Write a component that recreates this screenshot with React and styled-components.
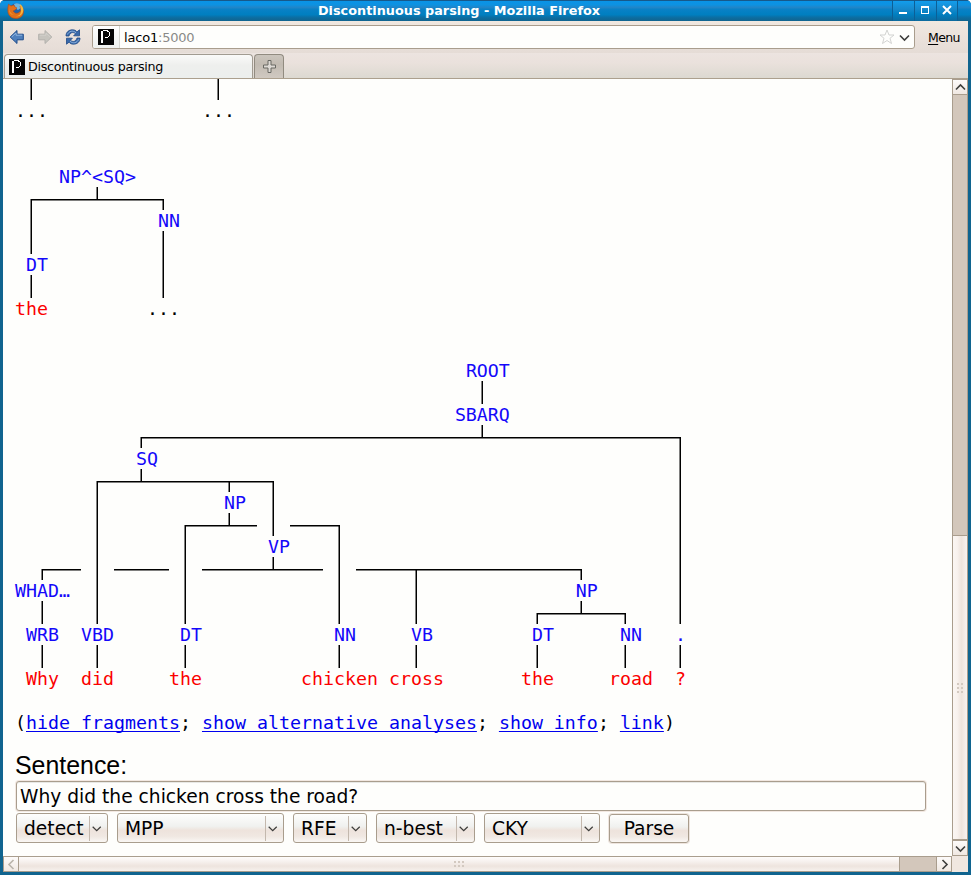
import React from 'react';
import styled, { createGlobalStyle, css } from 'styled-components';

const GlobalStyle = createGlobalStyle`
  * { box-sizing: border-box; }
  html, body { margin: 0; padding: 0; overflow: hidden; background: #fff; }
  button, input { margin: 0; font: inherit; color: inherit; }
`;

const ui = `"DejaVu Sans", sans-serif`;
const edge = '#a99d8d';

const Window = styled.div`
  width: 971px;
  height: 875px;
  display: flex;
  flex-direction: column;
  padding: 0 3px 3px;
  background: #10648f;
  border-radius: 5px 5px 0 0;
  font-family: ${ui};
  color: #000;
  overflow: hidden;
`;

const TitleBar = styled.header`
  flex: none;
  height: 21px;
  margin: 0 -3px;
  display: flex;
  align-items: center;
  border-top: 1px solid #17598a;
  background: linear-gradient(#0a93e6 0, #0d92e2 18%, #2085c8 32%, #0981c6 42%, #007fc0 68%, #0d6c9f 84%, #10648f 100%);
`;

const TitleIcon = styled.div`
  width: 32px;
  height: 20px;
  padding-left: 7px;
`;

const Title = styled.h1`
  flex: 1;
  margin: 0;
  padding-right: 6px;
  text-align: center;
  font-size: 12.8px;
  line-height: 20px;
  font-weight: bold;
  letter-spacing: ${(p) => p.$track}px;
  color: #fff;
`;

const WindowControls = styled.div`
  display: flex;
  height: 20px;
  padding-right: 13px;
`;

const WindowButton = styled.button`
  width: 22px;
  height: 20px;
  padding: 0;
  border: 0;
  border-left: 1px solid #0c5f96;
  background: linear-gradient(#129ded, #1789cc 40%, #0080c2 65%, #0d6a9d);
  display: flex;
  &:last-child { border-right: 1px solid #0c5f96; }
`;

const Toolbar = styled.nav`
  flex: none;
  height: 32px;
  display: flex;
  align-items: center;
  background: linear-gradient(#f0e8e0, #ebe2dc 45%, #e5dcd6);
`;

const NavButton = styled.button`
  width: 28px;
  height: 32px;
  padding: 0;
  border: 0;
  background: none;
  display: flex;
  align-items: center;
  justify-content: center;
`;

const AddressBar = styled.div`
  width: 823px;
  height: 24px;
  margin-left: 5px;
  display: flex;
  align-items: center;
  border: 1px solid ${edge};
  border-radius: 3px;
  background: #fefefc;
  overflow: hidden;
`;

const SiteBadge = styled.div`
  width: 27px;
  height: 22px;
  padding: 3px 0 0 5px;
  border-right: 1px solid #d5d5d0;
  background: linear-gradient(#fff, #eef0ee);
`;

const Address = styled.div`
  flex: 1;
  padding-left: 4px;
  padding-top: 1px;
  font-size: 13px;
  line-height: 22px;
  letter-spacing: -0.2px;
  span { color: #8a8a88; }
`;

const MenuLabel = styled.div`
  margin-left: 13px;
  padding-top: 1px;
  font-size: 12.5px;
  line-height: 32px;
  letter-spacing: -0.6px;
  u { text-underline-offset: 2px; text-decoration-thickness: 1px; }
`;

const TabStrip = styled.div`
  flex: none;
  height: 26px;
  display: flex;
  align-items: flex-end;
  gap: 1px;
  padding-left: 1px;
  border-bottom: 1px solid #aca08e;
  background: linear-gradient(#ece4e0, #eae1dc 40%, #dcd9d1);
`;

const Tab = styled.div`
  width: 249px;
  height: 24px;
  display: flex;
  align-items: center;
  gap: 3px;
  padding-left: 4px;
  border: 1px solid #a19b91;
  border-bottom: 0;
  border-radius: 4px 4px 0 0;
  background: linear-gradient(#fafaf9, #eeefed 45%, #ecefed);
  font-size: 12.7px;
  letter-spacing: ${(p) => p.$track}px;
`;

const NewTab = styled.button`
  width: 30px;
  height: 24px;
  padding: 0;
  display: flex;
  align-items: center;
  justify-content: center;
  border: 1px solid #918b80;
  border-bottom: 0;
  border-radius: 4px 4px 0 0;
  background: linear-gradient(#cbc5bd, #c2bbb2 40%, #d0c9c1);
`;

const Viewport = styled.div`
  flex: none;
  height: 793px;
  display: grid;
  grid-template-columns: 949px 16px;
  grid-template-rows: 777px 16px;
  background: #f0e7e0;
`;

const Page = styled.main`
  padding-left: 12px;
  background: #fefefc;
  overflow: hidden;
`;

const Document = styled.div`
  margin-top: -1px;
`;

const Tree = styled.pre`
  position: relative;
  margin: 0 0 ${(p) => p.$after}px;
  font-family: "DejaVu Sans Mono", monospace;
  font-size: 18.27px;
  line-height: 22px;
`;

const Branches = styled.svg`
  position: absolute;
  top: 0;
  left: 0;
  overflow: visible;
`;

const TreeRow = styled.div`
  height: 22px;
  white-space: pre;
`;

const Label = styled.span`
  color: ${(p) => ({ tag: '#1408fa', word: '#fb0000', gap: '#000' })[p.$kind]};
`;

const Links = styled.p`
  margin: 0 0 17px;
  font-family: "DejaVu Sans Mono", monospace;
  font-size: 18.27px;
  line-height: 22px;
  white-space: pre;
  a { color: #0000ee; text-decoration: underline; text-decoration-thickness: 1px; text-underline-offset: 2px; text-decoration-skip-ink: none; }
`;

const FieldLabel = styled.label`
  display: block;
  height: 30px;
  font-family: "Liberation Sans", sans-serif;
  font-size: 24.9px;
  line-height: 29px;
`;

const Sentence = styled.input`
  display: block;
  width: 910px;
  height: 30px;
  margin-left: 1px;
  padding: 0 3px;
  border: 1px solid ${edge};
  border-radius: 3px;
  background: #fefefc;
  box-shadow: inset 0 1px #e8e8e5, 0 0 0 1px #f2e8e1;
  font-family: ${ui};
  font-size: 18.67px;
  outline: 0;
`;

const Controls = styled.div`
  display: flex;
  gap: 9px;
  padding: 2px 0 0 1px;
`;

const raised = css`
  border: 1px solid ${edge};
  border-radius: 3px;
  background: linear-gradient(#fefefd, #f0f1ef 44%, #eee3dc 58%, #f0e8e2 80%, #faf7f4);
  font-family: ${ui};
  font-size: 18.67px;
`;

const Picker = styled.button`
  ${raised}
  width: ${(p) => p.$width}px;
  height: 30px;
  padding: 0 0 0 7px;
  display: flex;
  align-items: center;
  justify-content: space-between;
  svg { flex: none; width: 18px; height: 25px; border-left: 1px solid #c3b8ad; }
`;

const ParseButton = styled.button`
  ${raised}
  width: 80px;
  height: 29px;
  margin-top: 1px;
  padding: 0;
  box-shadow: 0 0 0 1px #eee5de;
`;

const Scrollbar = styled.div`
  display: flex;
  flex-direction: ${(p) => (p.$vertical ? 'column' : 'row')};
  background: #d3c7bb;
  border: 0 solid ${edge};
  border-width: ${(p) => (p.$vertical ? '0 1px' : '1px 0')};
`;

const ScrollButton = styled.button`
  flex: none;
  width: ${(p) => (p.$vertical ? 14 : 16)}px;
  height: ${(p) => (p.$vertical ? 16 : 14)}px;
  padding: 0;
  border: 0 solid ${edge};
  border-width: ${(p) => (p.$vertical ? '1px 0' : '0 1px')};
  display: flex;
  align-items: center;
  justify-content: center;
  background: linear-gradient(#fdfbfa, #f0e8e2);
  svg { flex: none; }
`;

const Thumb = styled.div`
  flex: none;
  display: flex;
  align-items: center;
  justify-content: center;
  ${(p) =>
    p.$vertical
      ? css`height: ${p.$size}px; border-top: 1px solid ${edge}; border-bottom: 1px solid ${edge}; background: linear-gradient(90deg, #fbf6f3, #f8f2ee 30%, #eee4dd 60%, #f8f2ef);`
      : css`width: ${p.$size}px; background: linear-gradient(#fefcfb, #f7f2ef 30%, #eee4de 65%, #f6f1ed);`}
`;

const Track = styled.div`
  flex: none;
  ${(p) => (p.$vertical ? 'height' : 'width')}: ${(p) => p.$size}px;
  border: 0 solid ${edge};
  border-left-width: ${(p) => (p.$vertical ? 0 : 1)}px;
`;

function Firefox() {
  return (
    <svg width="18" height="19" viewBox="0 0 18 19">
      <circle cx="9.3" cy="9" r="6.8" fill="#1f62ab" />
      <path d="M7 3c3-2 7 0 8 3l-4 3-3-2z" fill="#6fb4dc" />
      <path d="M1.500 3.200 4 5l3-1 1 2 2 1-2 2-2 1 2 2c3 1 5-1 6-3l-1-4c3 2 3.500 4 3.500 5.500C16.500 15 13 17.500 9 17.500 4 17.500.8 14 .8 9.500.8 7 1 5 1.500 3.200z" fill="#e2701a" stroke="#b54918" strokeWidth=".6" />
      <path d="M13 3c3 2 4 5 3 8-1 3-4 5-7 4 3 0 5-2 5-5z" fill="#f7b53b" />
      <path d="M2 6c0 4 2 7 5 8-4 0-5-3-5-8z" fill="#f49b2c" />
    </svg>
  );
}

function Favicon() {
  return (
    <svg width="16" height="16" viewBox="0 0 16 16" shapeRendering="crispEdges">
      <path fill="#050505" d="M0 0h16v16H0z" />
      <path fill="#fff" d="M3 2h2v12H3zM5 1h5v1H5zM9 2h2v1H9zM11 3h1v4h-1zM10 7h1v1h-1zM7 8h3v1H7z" />
    </svg>
  );
}

function ArrowLeft({ muted }) {
  return (
    <svg width="16" height="16" viewBox="0 0 16 16" transform={muted ? 'scale(-1 1)' : undefined}>
      <path d="M1.200 8 8 1.500v3.700h6.300v5.600H8v3.700z" fill={muted ? '#c6c4be' : '#4f80bd'} stroke={muted ? '#b2b0ac' : '#1d4b8b'} />
      <path d="M2.700 8 7 4v2.200h6.200" fill="none" stroke={muted ? '#d2d0cb' : '#8fb4df'} />
    </svg>
  );
}

function Reload() {
  return (
    <svg width="16" height="16" viewBox="0 0 16 16">
      <g fill="#3969aa" stroke="#204a87" strokeWidth=".8">
        <path id="reload-half" d="M1 7C1 3 4 .8 7.500.8c2 0 3.500.7 4.500 2l2.500-2v6H8.600l2-2C8 2.500 5 3.500 4 7z" />
        <use href="#reload-half" transform="rotate(180 8 8)" />
      </g>
      <path d="M2.500 5.500C4 2 8 1 11 3.800M13.500 10.500C12 14 8 15 5 12.200" fill="none" stroke="#8db2dd" />
    </svg>
  );
}

function Chevron({ dir = 'down', color = '#3e3e3c', width = 1.6, shift = 0 }) {
  const d = {
    down: 'M5 10.500l4.500 4.500 4.500-4.500',
    up: 'M5 14.500l4.500-4.500 4.500 4.500',
    left: 'M11.500 8l-4.500 4.500 4.500 4.500',
    right: 'M7.500 8l4.500 4.500-4.500 4.500',
  }[dir];
  return (
    <svg width="19" height="25" viewBox={`${shift} 0 19 25`}>
      <path d={d} fill="none" stroke={color} strokeWidth={width} />
    </svg>
  );
}

function Grip({ vertical }) {
  const cols = vertical ? [0, 4] : [0, 4, 8];
  const rows = vertical ? [0, 4, 8] : [0, 4];
  return (
    <svg width="10" height="10" viewBox="0 0 10 10" shapeRendering="crispEdges">
      {cols.flatMap((x) => rows.map((y) => <rect key={`${x}-${y}`} x={x + (vertical ? 2 : 0)} y={y + (vertical ? 0 : 2)} width="2" height="2" fill="#d3c9c0" />))}
    </svg>
  );
}

const bars = (...cols) => cols.map((col) => [col, '│']);
const h = (n) => '─'.repeat(n);

const clippedTree = [bars(1, 18), [[0, '...'], [17, '...']]];

const fragment = [
  [[4, 'NP^<SQ>']],
  [[1, `┌${h(5)}┴${h(5)}┐`]],
  [[1, '│'], [13, 'NN']],
  bars(1, 13),
  [[1, 'DT'], [13, '│']],
  bars(1, 13),
  [[0, 'the'], [12, '...']],
];

const parseTree = [
  [[41, 'ROOT']],
  bars(42),
  [[40, 'SBARQ']],
  [[11, `┌${h(30)}┴${h(17)}┐`]],
  [[11, 'SQ'], [60, '│']],
  [[7, `┌${h(3)}┴${h(7)}┬${h(3)}┐`], [60, '│']],
  [[7, '│'], [19, 'NP'], [23, '│'], [60, '│']],
  [[7, '│'], [15, `┌${h(3)}┴${h(2)}`], [23, '│'], [25, `${h(4)}┐`], [60, '│']],
  [[7, '│'], [15, '│'], [23, 'VP'], [29, '│'], [60, '│']],
  [[2, `┌${h(3)}`], [7, '│'], [9, h(5)], [15, '│'], [17, `${h(6)}┴${h(4)}`], [29, '│'], [31, `${h(5)}┬${h(14)}┐`], [60, '│']],
  [[0, 'WHAD…'], ...bars(7, 15, 29, 36), [51, 'NP'], [60, '│']],
  [...bars(2, 7, 15, 29, 36), [47, `┌${h(3)}┴${h(3)}┐`], [60, '│']],
  [[1, 'WRB'], [6, 'VBD'], [15, 'DT'], [29, 'NN'], [36, 'VB'], [47, 'DT'], [55, 'NN'], [60, '.']],
  bars(2, 7, 15, 29, 36, 47, 55, 60),
  [[1, 'Why'], [6, 'did'], [14, 'the'], [26, 'chicken'], [34, 'cross'], [46, 'the'], [54, 'road'], [60, '?']],
];

const isBranch = (text) => /^[│┌┐┴┬─]/.test(text);

function labelKind(text) {
  if (text === '.' || /^[A-Z]{2}/.test(text)) return 'tag';
  return /^[A-Za-z?]/.test(text) ? 'word' : 'gap';
}

// Each branch mark occupies one 11 by 22 character cell.
const CELL_W = 11;
const CELL_H = 22;
const STROKE = 1.5;
const vertical = { '│': [-1, 22], '┌': [11, 22], '┐': [11, 22], '┬': [11, 22], '┴': [-1, 12] };
const horizontal = { '─': [0, 11], '┌': [4.5, 11], '┐': [0, 6], '┬': [0, 11], '┴': [0, 11] };

function branchPath(rows) {
  let d = '';
  rows.forEach((row, r) =>
    row.filter(([, text]) => isBranch(text)).forEach(([col, text]) => {
      [...text].forEach((mark, i) => {
        const x = (col + i) * CELL_W;
        const y = r * CELL_H;
        const v = vertical[mark];
        const z = horizontal[mark];
        if (v) d += `M${x + 4.5} ${y + v[0]}h${STROKE}v${v[1] - v[0]}h-${STROKE}z`;
        if (z) d += `M${x + z[0]} ${y + 11}h${z[1] - z[0]}v${STROKE}h${z[0] - z[1]}z`;
      });
    })
  );
  return d;
}

function TreeView({ rows, after = 0 }) {
  return (
    <Tree $after={after}>
      <Branches width={61 * CELL_W} height={rows.length * CELL_H}>
        <path d={branchPath(rows)} />
      </Branches>
      {rows.map((row, i) => {
        let at = 0;
        return (
          <TreeRow key={i}>
            {row.filter(([, text]) => !isBranch(text)).map(([col, text]) => {
              const pad = ' '.repeat(col - at);
              at = col + text.length;
              return (
                <React.Fragment key={col}>
                  {pad}
                  <Label $kind={labelKind(text)}>{text}</Label>
                </React.Fragment>
              );
            })}
          </TreeRow>
        );
      })}
    </Tree>
  );
}

const pickers = [
  ['detect', 92],
  ['MPP', 167],
  ['RFE', 74],
  ['n-best', 99],
  ['CKY', 116],
];

export default function App() {
  return (
    <>
      <GlobalStyle />
      <Window>
        <TitleBar>
          <TitleIcon><Firefox /></TitleIcon>
          <Title $track={0.02}>Discontinuous parsing - Mozilla Firefox</Title>
          <WindowControls>
            <WindowButton aria-label="Minimize"><svg width="21" height="20"><path d="M6 11h8v2H6z" fill="#fff" /></svg></WindowButton>
            <WindowButton aria-label="Maximize"><svg width="21" height="20"><path fillRule="evenodd" d="M6 5h8v8H6zM7 7v5h6V7z" fill="#fff" /></svg></WindowButton>
            <WindowButton aria-label="Close"><svg width="21" height="20"><path d="M6 5l8 8M14 5l-8 8" stroke="#fff" strokeWidth="2" /></svg></WindowButton>
          </WindowControls>
        </TitleBar>
        <Toolbar>
          <NavButton aria-label="Back"><ArrowLeft /></NavButton>
          <NavButton aria-label="Forward"><ArrowLeft muted /></NavButton>
          <NavButton aria-label="Reload"><Reload /></NavButton>
          <AddressBar>
            <SiteBadge><Favicon /></SiteBadge>
            <Address>laco1<span>:5000</span></Address>
            <svg width="17" height="16" viewBox="0 0 17 16">
              <path d="M9 1l2 5h5l-4 3.300 1.500 5.200L9 11.500l-4.500 3L6 9.300 2 6h5z" fill="#fefefc" stroke="#d2d3d1" />
            </svg>
            <Chevron width={1.6} />
          </AddressBar>
          <MenuLabel><u>M</u>enu</MenuLabel>
        </Toolbar>
        <TabStrip>
          <Tab $track={-0.28}><Favicon />Discontinuous parsing</Tab>
          <NewTab aria-label="New tab">
            <svg width="13" height="13" viewBox="0 0 13 13">
              <path d="M5 .5h3V5h4.500v3H8v4.500H5V8H.5V5H5z" fill="#ddd9d4" stroke="#686863" />
            </svg>
          </NewTab>
        </TabStrip>
        <Viewport>
          <Page>
            <Document>
              <TreeView rows={clippedTree} after={44} />
              <TreeView rows={fragment} after={40} />
              <TreeView rows={parseTree} after={22} />
              <Links>(<a>hide fragments</a>; <a>show alternative analyses</a>; <a>show info</a>; <a>link</a>)</Links>
              <FieldLabel htmlFor="sentence">Sentence:</FieldLabel>
              <Sentence id="sentence" defaultValue="Why did the chicken cross the road?" />
              <Controls>
                {pickers.map(([text, width]) => (
                  <Picker key={text} $width={width}>{text}<Chevron width={1.4} shift={2} /></Picker>
                ))}
                <ParseButton>Parse</ParseButton>
              </Controls>
            </Document>
          </Page>
          <Scrollbar $vertical>
            <ScrollButton $vertical aria-label="Scroll up"><Chevron dir="up" /></ScrollButton>
            <Track $vertical $size={440} />
            <Thumb $vertical $size={305}><Grip vertical /></Thumb>
            <ScrollButton $vertical aria-label="Scroll down"><Chevron /></ScrollButton>
          </Scrollbar>
          <Scrollbar>
            <ScrollButton aria-label="Scroll left"><Chevron dir="left" color="#b9b3aa" /></ScrollButton>
            <Thumb $size={880}><Grip /></Thumb>
            <Track $size={37} />
            <ScrollButton aria-label="Scroll right"><Chevron dir="right" /></ScrollButton>
          </Scrollbar>
        </Viewport>
      </Window>
    </>
  );
}
